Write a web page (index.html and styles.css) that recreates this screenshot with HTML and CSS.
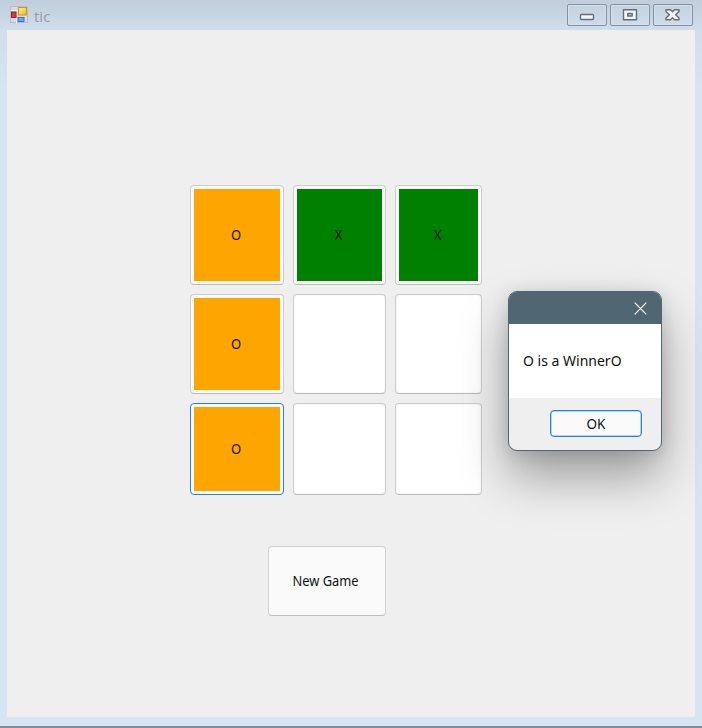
FILE: index.html
```html
<!DOCTYPE html>
<html lang="en">
<head>
<meta charset="utf-8">
<title>tic</title>
<link rel="stylesheet" href="styles.css">
</head>
<body>
<div class="window">
  <header class="titlebar">
    <svg class="app-icon" width="18" height="18" viewBox="0 0 18 18">
      <defs>
        <linearGradient id="y" x1="0" y1="0" x2="1" y2="1"><stop offset="0" stop-color="#ffef9a"/><stop offset="1" stop-color="#efb910"/></linearGradient>
      </defs>
      <rect x=".5" y=".5" width="17" height="16" fill="#d7dbe0" stroke="#b5bdc6"/>
      <path d="M.5 4.500h7M6.500 12v5" stroke="#f1f3f5"/>
      <rect x="8.500" y="1.500" width="8" height="7.500" fill="url(#y)" stroke="#c59b20"/>
      <rect x="1.500" y="6" width="4.500" height="5.500" fill="#cf4038" stroke="#9c2020"/>
      <rect x="8" y="11.500" width="6" height="4" fill="#6fa3ee" stroke="#3c70cd"/>
    </svg>
    <h1 class="title">tic</h1>
    <div class="controls">
      <button class="control" aria-label="Minimize"><svg width="38" height="20" viewBox="0 0 38 20"><rect x="12.500" y="9.500" width="13" height="5" rx="1" fill="#f3f5f7" stroke="#656d7b" stroke-width="1.400"/></svg></button>
      <button class="control" aria-label="Maximize"><svg width="38" height="20" viewBox="0 0 38 20"><path fill-rule="evenodd" d="M12.500 4.700h13v10h-13zM16.700 8.500v2.500h4.500V8.500z" fill="#f3f5f7" stroke="#656d7b" stroke-width="1.400" stroke-linejoin="round"/></svg></button>
      <button class="control" aria-label="Close"><svg width="38" height="20" viewBox="0 0 38 20"><path d="M12 4.700h4.500l2 2 2-2H25v1.800l-3.400 3.200 3.400 3.200v1.800h-4.500l-2-2-2 2H12v-1.800l3.400-3.200L12 6.500z" fill="#f3f5f7" stroke="#656d7b" stroke-width="1.400" stroke-linejoin="round"/></svg></button>
    </div>
  </header>
  <main class="client">
    <div class="board">
      <button class="cell o"><span>O</span></button>
      <button class="cell x"><span>X</span></button>
      <button class="cell x"><span>X</span></button>
      <button class="cell o"><span>O</span></button>
      <button class="cell"></button>
      <button class="cell"></button>
      <button class="cell o focused"><span>O</span></button>
      <button class="cell"></button>
      <button class="cell"></button>
    </div>
    <button class="new-game"><span>New Game</span></button>
  </main>
</div>
<div class="dialog" role="dialog">
  <div class="dialog-title">
    <svg width="13" height="13" viewBox="0 0 13 13"><path d="M.7.7l11.600 11.600M12.300.7L.7 12.300" stroke="#fff" stroke-width="1.200"/></svg>
  </div>
  <div class="dialog-message"><span>O is a WinnerO</span></div>
  <div class="dialog-actions"><button class="ok">OK</button></div>
</div>
</body>
</html>
```
FILE: styles.css
```css
* { box-sizing: border-box; }
body {
  margin: 0;
  width: 702px;
  height: 728px;
  overflow: hidden;
  position: relative;
  font-family: "Noto Sans", sans-serif;
  font-size: 14px;
  color: #111;
}
button { font: inherit; color: inherit; padding: 0; margin: 0; }
.window {
  height: 728px;
  padding: 0 7px 9px;
  display: flex;
  flex-direction: column;
  background: linear-gradient(#c0cedc 0, #d0deeb 30px, #d7e4f2 90px);
  border-bottom: 2px solid #848c96;
}
.titlebar {
  flex: none;
  height: 30px;
  display: flex;
  align-items: flex-start;
  padding: 4px 2px 0 3px;
}
.app-icon { margin-top: 2px; }
.title {
  margin: 2px 0 0 6px;
  font: 15px/20px "Open Sans", sans-serif;
  color: #979da3;
}
.controls { display: flex; gap: 3px; margin-left: auto; }
.control {
  width: 40px;
  height: 22px;
  border: 1px solid #8391a7;
  border-radius: 2px;
  background: linear-gradient(#c5d2e0, #cfdce9);
  box-shadow: inset 0 0 0 1px #d5e0eb;
}
.control svg { display: block; }
.client {
  width: 688px;
  flex: 1;
  padding-top: 155px;
  background: #efefef;
}
.board {
  display: grid;
  grid-template-columns: 94px 93px 87px;
  grid-template-rows: 100px 100px 92px;
  column-gap: 9px;
  row-gap: 9px;
  margin-left: 183px;
  width: 292px;
}
.cell {
  border: 1px solid #cdcdcd;
  border-bottom-color: #bababa;
  border-radius: 4px;
  background: #fff;
}
.cell:empty { box-shadow: inset 0 0 2px #e5e5e5; }
.o, .x { padding: 3px; }
.o { background: linear-gradient(#ffa500, #ffa500) content-box, #fafafa; }
.x { background: linear-gradient(#008000, #008000) content-box, #fafafa; }
.cell span { display: block; transform: translate(-1px, -1px) scaleX(.93); }
.focused { border-color: #2783cf; }
.new-game {
  display: block;
  width: 118px;
  height: 70px;
  margin: 51px 0 0 261px;
  border: 1px solid #d0d0d0;
  border-bottom-color: #bdbdbd;
  border-radius: 4px;
  background: #fafafa;
}
.new-game span { display: block; transform: translate(-1.500px, -1px) scaleX(.92); }
.dialog {
  position: absolute;
  left: 508px;
  top: 291px;
  width: 154px;
  height: 160px;
  display: flex;
  flex-direction: column;
  border: 1px solid #506672;
  border-radius: 9px;
  overflow: hidden;
  background: #efefef;
  box-shadow: 0 26px 48px rgba(0, 0, 0, .34), 0 2px 18px rgba(0, 0, 0, .12);
}
.dialog-title {
  height: 32px;
  flex: none;
  display: flex;
  justify-content: flex-end;
  align-items: center;
  padding-right: 14px;
  background: #506672;
}
.dialog-message {
  height: 74px;
  flex: none;
  display: flex;
  align-items: center;
  padding: 0 0 2px 14px;
  background: #fff;
  white-space: nowrap;
}
.dialog-actions { padding: 12px 0 0 41px; }
.ok {
  display: block;
  width: 92px;
  height: 27px;
  border: 1px solid #2783cf;
  box-shadow: inset 0 0 0 .5px #6aafe3;
  border-radius: 4px;
  background: #fafafa;
  font-size: 13.500px;
}
```
